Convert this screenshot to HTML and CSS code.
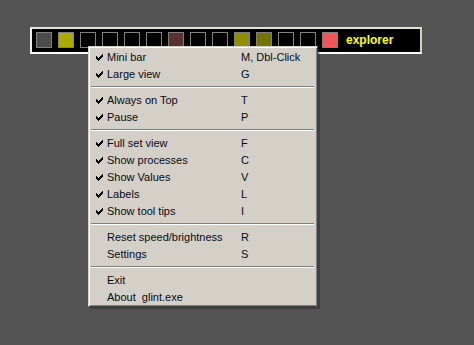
FILE: index.html
```html
<!DOCTYPE html>
<html lang="en">
  <head>
    <meta charset="UTF-8" />
    <link rel="stylesheet" href="styles.css">
  </head>
  <body>
    <div class="bar">
      <span class="cell c-gray"></span>
      <span class="cell c-yellow"></span>
      <span class="cell"></span>
      <span class="cell"></span>
      <span class="cell"></span>
      <span class="cell"></span>
      <span class="cell c-brown"></span>
      <span class="cell"></span>
      <span class="cell"></span>
      <span class="cell c-mustard"></span>
      <span class="cell c-olive"></span>
      <span class="cell"></span>
      <span class="cell"></span>
      <span class="cell c-red"></span>
      <span class="label">explorer</span>
    </div>

    <div class="menu">
      <div class="item"><svg class="check" width="7" height="7"><path d="M0 2h1v1h1v1h1V3h1V2h1V1h1V0h1v3H6v1H5v1H4v1H3v1H2V6H1V5H0z"/></svg><span class="name">Mini bar</span><span class="key">M, Dbl-Click</span></div>
      <div class="item"><svg class="check" width="7" height="7"><path d="M0 2h1v1h1v1h1V3h1V2h1V1h1V0h1v3H6v1H5v1H4v1H3v1H2V6H1V5H0z"/></svg><span class="name">Large view</span><span class="key">G</span></div>
      <div class="sep"></div>
      <div class="item"><svg class="check" width="7" height="7"><path d="M0 2h1v1h1v1h1V3h1V2h1V1h1V0h1v3H6v1H5v1H4v1H3v1H2V6H1V5H0z"/></svg><span class="name">Always on Top</span><span class="key">T</span></div>
      <div class="item"><svg class="check" width="7" height="7"><path d="M0 2h1v1h1v1h1V3h1V2h1V1h1V0h1v3H6v1H5v1H4v1H3v1H2V6H1V5H0z"/></svg><span class="name">Pause</span><span class="key">P</span></div>
      <div class="sep"></div>
      <div class="item"><svg class="check" width="7" height="7"><path d="M0 2h1v1h1v1h1V3h1V2h1V1h1V0h1v3H6v1H5v1H4v1H3v1H2V6H1V5H0z"/></svg><span class="name">Full set view</span><span class="key">F</span></div>
      <div class="item"><svg class="check" width="7" height="7"><path d="M0 2h1v1h1v1h1V3h1V2h1V1h1V0h1v3H6v1H5v1H4v1H3v1H2V6H1V5H0z"/></svg><span class="name">Show processes</span><span class="key">C</span></div>
      <div class="item"><svg class="check" width="7" height="7"><path d="M0 2h1v1h1v1h1V3h1V2h1V1h1V0h1v3H6v1H5v1H4v1H3v1H2V6H1V5H0z"/></svg><span class="name">Show Values</span><span class="key">V</span></div>
      <div class="item"><svg class="check" width="7" height="7"><path d="M0 2h1v1h1v1h1V3h1V2h1V1h1V0h1v3H6v1H5v1H4v1H3v1H2V6H1V5H0z"/></svg><span class="name">Labels</span><span class="key">L</span></div>
      <div class="item"><svg class="check" width="7" height="7"><path d="M0 2h1v1h1v1h1V3h1V2h1V1h1V0h1v3H6v1H5v1H4v1H3v1H2V6H1V5H0z"/></svg><span class="name">Show tool tips</span><span class="key">I</span></div>
      <div class="sep"></div>
      <div class="item"><span class="name">Reset speed/brightness</span><span class="key">R</span></div>
      <div class="item"><span class="name">Settings</span><span class="key">S</span></div>
      <div class="sep"></div>
      <div class="item"><span class="name">Exit</span></div>
      <div class="item"><span class="name">About&nbsp; glint.exe</span></div>
    </div>
  </body>
</html>
```

FILE: styles.css
```css
body {
  margin: 0;
  padding: 27px 0 0 30px;
  background: #545454;
  font-family: "Liberation Sans", Arial, sans-serif;
  font-size: 11px;
  height: 318px;
  position: relative;
}
.bar {
  width: 384px;
  height: 20px;
  background: #000;
  border: 2px solid;
  border-color: #e4e2dc #d4d0c8 #ffffff #f0f0f0;
  display: flex;
  align-items: flex-start;
  gap: 6px;
  padding: 3px 0 0 4px;
}
.cell {
  width: 14px;
  height: 14px;
  border: 1px solid #808080;
  background: #000;
  flex: none;
}
.c-gray { background: #4c4c4c; }
.c-yellow { background: #adad00; }
.c-brown { background: #5c302c; }
.c-mustard { background: #8f8f00; }
.c-olive { background: #747400; }
.c-red { background: #f25555; }
.label {
  color: #ffff00;
  font-weight: bold;
  font-size: 12px;
  line-height: 16px;
  margin-left: 2px;
}

/* popup menu */
.menu {
  position: absolute;
  left: 88px;
  top: 46px;
  width: 228px;
  padding: 1px 0;
  background: #d4d0c8;
  border: 1px solid;
  border-color: #d4d0c8 #404040 #404040 #d4d0c8;
  box-shadow: inset 1px 1px 0 #fff, inset -1px -1px 0 #808080, 2px 2px 0 rgba(0, 0, 0, 0.25);
  color: #0a0a14;
}
.item {
  display: flex;
  height: 17px;
  line-height: 19px;
  padding-left: 18px;
  position: relative;
}
.item .name {
  width: 134px;
}
.check {
  position: absolute;
  left: 7px;
  top: 6px;
  fill: #000;
}
.sep {
  height: 0;
  margin: 4px 3px 3px 2px;
  border-top: 1px solid #808080;
  border-bottom: 1px solid #fff;
}
```
